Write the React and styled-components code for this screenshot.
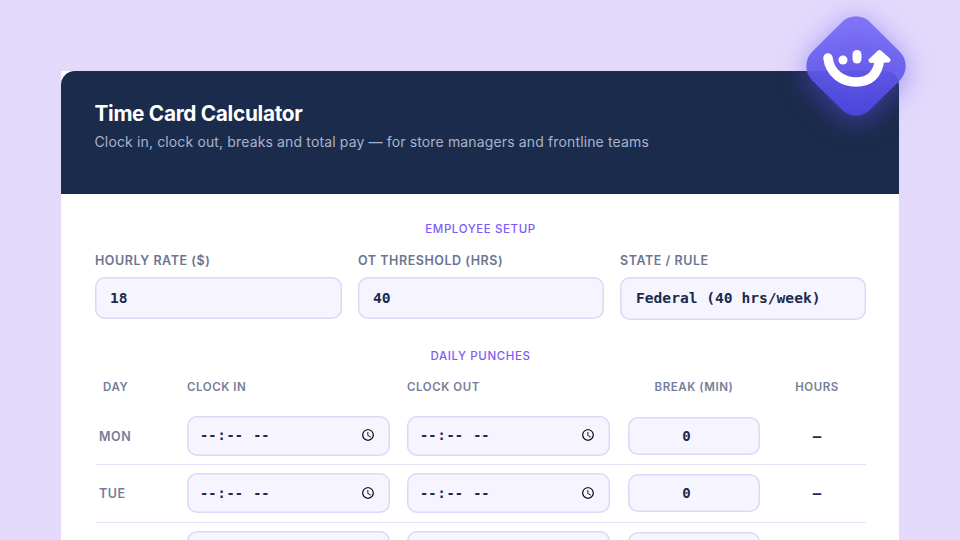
import React from "react";
import styled, { createGlobalStyle } from "styled-components";

const Global = createGlobalStyle`
  html, body { margin: 0; height: 540px; overflow: hidden; background: #e3d9fb; }
  body { font-family: Inter, "Liberation Sans", sans-serif; }
  * { box-sizing: border-box; }
`;
const Page = styled.div`
  position: relative;
  width: 960px;
  height: 540px;
  overflow: hidden;
  padding: 71px 61px 0;
`;
const Card = styled.main`
  background: #fff;
  width: 838px;
`;
const Header = styled.header`
  background: #1b2b4b;
  border-radius: 14px 14px 0 0;
  height: 123px;
  padding: 30px 33.5px 0;
`;
const Title = styled.h1`
  margin: 0;
  color: #fff;
  font-size: 20.8px;
  line-height: 26px;
  font-weight: 700;
  letter-spacing: -0.3px;
`;
const Subtitle = styled.p`
  margin: 5px 0 0;
  color: #a8b3cb;
  font-size: 14px;
  line-height: 20px;
  letter-spacing: 0.14px;
`;
const Body = styled.div`
  padding: 28px 33px 0 34px;
`;
const SectionTitle = styled.h2`
  margin: 0;
  text-align: center;
  color: #7c5cf6;
  font-size: 11.5px;
  line-height: 15px;
  font-weight: 500;
  letter-spacing: 0.6px;
  text-transform: uppercase;
`;
const SetupGrid = styled.div`
  display: grid;
  grid-template-columns: 247px 246px 246px;
  column-gap: 16px;
  margin-top: 16px;
`;
const Field = styled.label`
  display: flex;
  flex-direction: column;
  gap: 9px;
`;
const FieldLabel = styled.span`
  color: #6c7590;
  font-size: 12.5px;
  line-height: 15px;
  font-weight: 600;
  letter-spacing: 0.55px;
  text-transform: uppercase;
`;
const controlStyles = `
  background: #f6f4fe;
  border: 0;
  box-shadow: inset 0 0 0 1.5px #ded8f6;
  color: #1b2b4b;
  font-family: "DejaVu Sans Mono", monospace;
  font-size: 14.6px;
  font-weight: 700;
  outline: none;
  margin: 0;
`;
const TextInput = styled.input`
  ${controlStyles}
  width: 100%;
  height: 42px;
  border-radius: 10px;
  padding: 0 14px 2px 15px;
  appearance: textfield;
  &::-webkit-inner-spin-button { display: none; }
`;
const RuleSelect = styled.select`
  ${controlStyles}
  width: 100%;
  height: 43px;
  border-radius: 10px;
  padding: 0 16px 2px;
  appearance: none;
`;
const PunchSection = styled.section`
  margin-top: 29px;
`;
const Table = styled.table`
  width: 770px;
  margin: 7px 0 0 1px;
  border-collapse: collapse;
  table-layout: fixed;
`;
const HeadCell = styled.th`
  height: 36px;
  padding: 0 8px 4px;
  color: #757d9a;
  font-size: 11.5px;
  font-weight: 600;
  letter-spacing: 0.55px;
  text-transform: uppercase;
  text-align: ${(p) => p.$align || "left"};
  &:first-child { padding-left: 7px; }
`;
const Row = styled.tr`
  border-bottom: 1px solid #e6e2f7;
`;
const DayCell = styled.td`
  height: 57.5px;
  padding: 1px 3px 0;
  color: #757d9a;
  font-size: 12.5px;
  font-weight: 600;
  letter-spacing: 0.5px;
`;
const InputCell = styled.td`
  padding: 0 8px;
`;
const HoursCell = styled.td`
  padding: 0 8px;
  text-align: center;
  color: #1b2b4b;
  font-family: "DejaVu Sans Mono", monospace;
  font-size: 14px;
  font-weight: 700;
`;
const TimeInput = styled.input`
  ${controlStyles}
  display: block;
  width: 203px;
  height: 40px;
  border-radius: 10px;
  padding: 0 12px;
  font-size: 13.6px;
`;
const BreakInput = styled.input`
  ${controlStyles}
  display: block;
  width: 100%;
  height: 38px;
  border-radius: 10px;
  padding: 0 23px 0 8px;
  text-align: center;
  font-size: 14px;
  appearance: textfield;
  &::-webkit-inner-spin-button { display: none; }
`;
const Badge = styled.svg`
  position: absolute;
  left: 786px;
  top: 0;
  width: 140px;
  height: 132px;
  overflow: visible;
  filter: drop-shadow(0 5px 14px rgba(92, 78, 240, 0.6));
`;

const days = ["MON", "TUE", "WED"];
const noop = () => {};

export default function App() {
  return (
    <Page>
      <Global />
      <Card>
        <Header>
          <Title>Time Card Calculator</Title>
          <Subtitle>Clock in, clock out, breaks and total pay — for store managers and frontline teams</Subtitle>
        </Header>
        <Body>
          <SectionTitle>Employee Setup</SectionTitle>
          <SetupGrid>
            <Field>
              <FieldLabel>Hourly Rate ($)</FieldLabel>
              <TextInput type="number" value="18" onChange={noop} />
            </Field>
            <Field>
              <FieldLabel>OT Threshold (hrs)</FieldLabel>
              <TextInput type="number" value="40" onChange={noop} />
            </Field>
            <Field>
              <FieldLabel>State / Rule</FieldLabel>
              <RuleSelect value="federal" onChange={noop}>
                <option value="federal">Federal (40 hrs/week)</option>
              </RuleSelect>
            </Field>
          </SetupGrid>
          <PunchSection>
            <SectionTitle>Daily Punches</SectionTitle>
            <Table>
              <colgroup>
                <col style={{ width: 83 }} />
                <col style={{ width: 220 }} />
                <col style={{ width: 221 }} />
                <col style={{ width: 148 }} />
                <col style={{ width: 98 }} />
              </colgroup>
              <thead>
                <tr>
                  <HeadCell>Day</HeadCell>
                  <HeadCell>Clock In</HeadCell>
                  <HeadCell>Clock Out</HeadCell>
                  <HeadCell $align="center">Break (min)</HeadCell>
                  <HeadCell $align="center">Hours</HeadCell>
                </tr>
              </thead>
              <tbody>
                {days.map((d) => (
                  <Row key={d}>
                    <DayCell>{d}</DayCell>
                    <InputCell><TimeInput type="time" /></InputCell>
                    <InputCell><TimeInput type="time" /></InputCell>
                    <InputCell><BreakInput type="number" value="0" onChange={noop} /></InputCell>
                    <HoursCell>–</HoursCell>
                  </Row>
                ))}
              </tbody>
            </Table>
          </PunchSection>
        </Body>
      </Card>
      <Badge viewBox="0 0 140 132" aria-hidden="true">
        <defs>
          <linearGradient id="badgeFill" x1="0" y1="0" x2="1" y2="1">
            <stop offset="0" stopColor="#7f70f6" />
            <stop offset="1" stopColor="#4b45e2" />
          </linearGradient>
        </defs>
        <rect x="29" y="25" width="82" height="82" rx="20" transform="rotate(45 70 66)" fill="url(#badgeFill)" fillOpacity="0.9" />
        <path d="M42 58C44 74 57 82 70 82C84 82 92 74 93.500 60" fill="none" stroke="#fff" strokeWidth="9.500" strokeLinecap="round" />
        <path d="M85 60.500L93.500 52.500L102 60Z" fill="#fff" stroke="#fff" strokeWidth="5" strokeLinejoin="round" />
        <circle cx="57" cy="60" r="4.500" fill="#fff" />
        <rect x="66.500" y="50" width="9" height="13.500" rx="4.500" fill="#fff" />
      </Badge>
    </Page>
  );
}
